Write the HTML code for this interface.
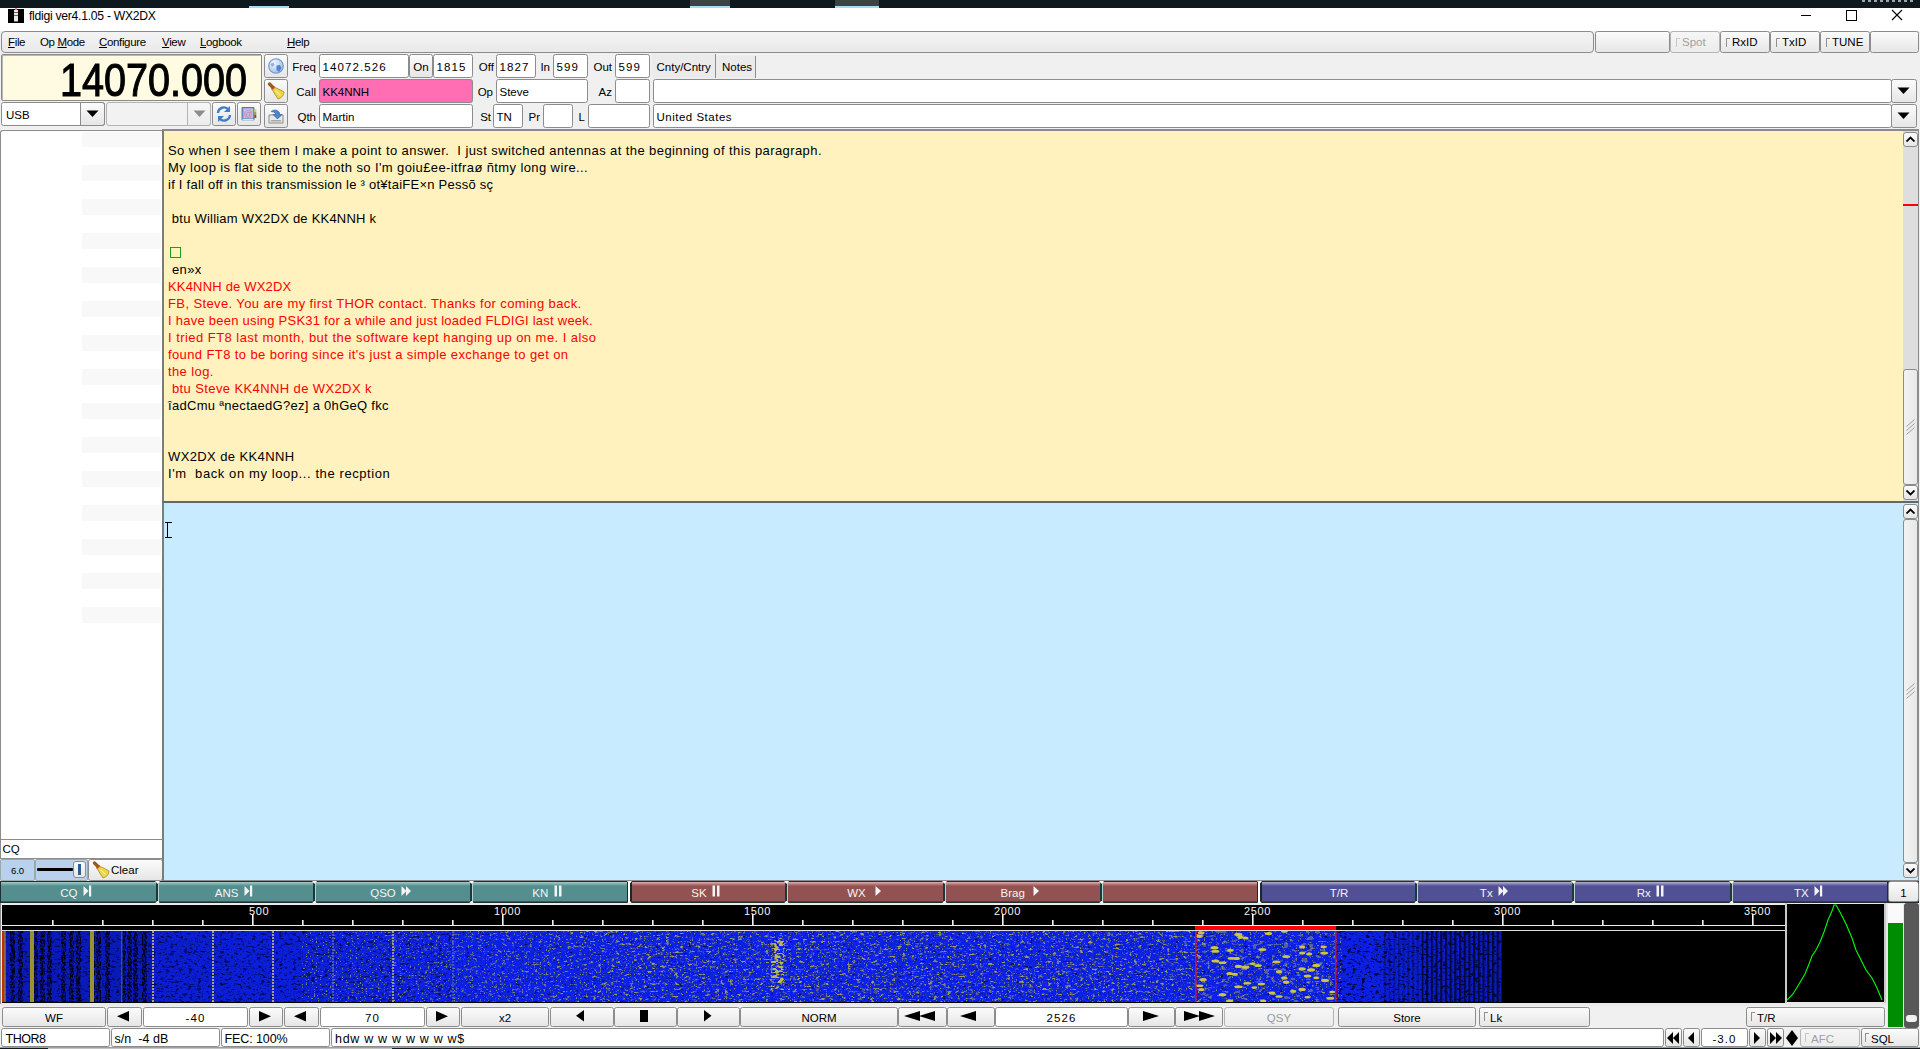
<!DOCTYPE html><html><head><meta charset="utf-8"><title>fldigi</title><style>
*{margin:0;padding:0;box-sizing:border-box}
html,body{width:1920px;height:1049px;overflow:hidden;background:#f0f0f0;font-family:"Liberation Sans",sans-serif;font-size:11.5px;color:#000}
div{position:absolute}
.t{white-space:pre;line-height:14px}
.fld{background:#fff;border:1px solid #8c8c8c;border-radius:2.5px}
.btn{background:linear-gradient(#fbfbfb,#e6e6e6);border:1px solid #8c8c8c;border-radius:2.5px}
.btnd{background:linear-gradient(#f6f6f6,#ececec);border:1px solid #b4b4b4;border-radius:3px}
.c{text-align:center}
</style></head><body><div class="" style="left:0px;top:0px;width:1920px;height:8px;background:#0d191e"></div><div class="" style="left:249px;top:6px;width:40px;height:2px;background:#a8dcf4"></div><div class="" style="left:690px;top:0px;width:40px;height:8px;background:#3a4446;border-bottom:2px solid #a8dcf4"></div><div class="" style="left:835px;top:0px;width:44px;height:8px;background:#3a4446;border-bottom:2px solid #a8dcf4"></div><div class="" style="left:1862px;top:0px;width:51px;height:2px;background:repeating-linear-gradient(90deg,#dde 0 3px,transparent 3px 6px);opacity:0.7"></div><div class="" style="left:0px;top:8px;width:1920px;height:23px;background:#fff"></div><div class="" style="left:8px;top:9px;width:16px;height:14px;background:#000"></div><div class="" style="left:14px;top:10px;width:4px;height:12px;background:repeating-linear-gradient(#e8e8e8 0 2.5px,#666 2.5px 3px)"></div><div class="" style="left:15px;top:8px;width:2px;height:2px;background:#ff8080"></div><div class="t" style="left:29px;top:5.77px;font-size:12.2px;line-height:20px;letter-spacing:-0.28px">fldigi ver4.1.05 - WX2DX</div><div class="" style="left:1801px;top:15px;width:10px;height:1px;background:#000"></div><div class="" style="left:1846px;top:10px;width:11px;height:11px;border:1px solid #000"></div><svg style="position:absolute;left:1891px;top:9px" width="12" height="12"><path d="M1 1L11 11M11 1L1 11" stroke="#000" stroke-width="1.1"/></svg><div class="btn" style="left:1px;top:31px;width:1593px;height:22px;background:linear-gradient(#f4f4f4,#e9e9e9);border-radius:4px"></div><div class="t" style="left:8px;top:32.02px;font-size:11.5px;line-height:20px;letter-spacing:-0.35px"><u>F</u>ile</div><div class="t" style="left:40px;top:32.02px;font-size:11.5px;line-height:20px;letter-spacing:-0.35px">Op <u>M</u>ode</div><div class="t" style="left:99px;top:32.02px;font-size:11.5px;line-height:20px;letter-spacing:-0.35px"><u>C</u>onfigure</div><div class="t" style="left:162px;top:32.02px;font-size:11.5px;line-height:20px;letter-spacing:-0.35px"><u>V</u>iew</div><div class="t" style="left:200px;top:32.02px;font-size:11.5px;line-height:20px;letter-spacing:-0.35px"><u>L</u>ogbook</div><div class="t" style="left:287px;top:32.02px;font-size:11.5px;line-height:20px;letter-spacing:-0.35px"><u>H</u>elp</div><div class="btn" style="left:1595px;top:31px;width:75px;height:22px;"></div><div class="btnd" style="left:1670px;top:31px;width:50px;height:22px;"></div><div class="" style="left:1676px;top:38px;width:4px;height:9px;border-left:1px solid #c8c8c8;border-top:1px solid #c8c8c8"></div><div class="t" style="left:1682px;top:32.02px;font-size:11.5px;line-height:20px;color:#a0a0a0">Spot</div><div class="btn" style="left:1720px;top:31px;width:50px;height:22px;"></div><div class="" style="left:1726px;top:38px;width:4px;height:9px;border-left:1px solid #909090;border-top:1px solid #909090"></div><div class="t" style="left:1732px;top:32.02px;font-size:11.5px;line-height:20px;color:#000">RxID</div><div class="btn" style="left:1770px;top:31px;width:50px;height:22px;"></div><div class="" style="left:1776px;top:38px;width:4px;height:9px;border-left:1px solid #909090;border-top:1px solid #909090"></div><div class="t" style="left:1782px;top:32.02px;font-size:11.5px;line-height:20px;color:#000">TxID</div><div class="btn" style="left:1820px;top:31px;width:50px;height:22px;"></div><div class="" style="left:1826px;top:38px;width:4px;height:9px;border-left:1px solid #909090;border-top:1px solid #909090"></div><div class="t" style="left:1832px;top:32.02px;font-size:11.5px;line-height:20px;color:#000">TUNE</div><div class="btn" style="left:1870px;top:31px;width:49px;height:22px;"></div><div class="" style="left:1px;top:54px;width:261px;height:47px;background:#fffbe2;border:1px solid #8a8a8a;border-radius:2px;box-shadow:inset 1px 1px 0 #b8b8b8"></div><div class="t" style="left:18px;width:229px;text-align:right;top:51.5px;font-size:47px;line-height:56px;transform:scaleX(0.842);transform-origin:100% 50%;-webkit-text-stroke:1.1px #000">14070.000</div><div class="fld" style="left:1px;top:102px;width:104px;height:24px;"></div><div class="t" style="left:6px;top:105.02px;font-size:11.5px;line-height:20px;">USB</div><div class="btn" style="left:80px;top:102px;width:25px;height:24px;border-radius:0 3px 3px 0"></div><svg style="position:absolute;left:86px;top:110px" width="13" height="8"><path d="M0.5 0.5H12.5L6.5 7z" fill="#000"/></svg><div class="btnd" style="left:106px;top:102px;width:105px;height:24px;background:#f2f2f2"></div><div class="btnd" style="left:187px;top:102px;width:24px;height:24px;border-radius:0 3px 3px 0"></div><svg style="position:absolute;left:193px;top:110px" width="13" height="8"><path d="M0.5 0.5H12.5L6.5 7z" fill="#8c8c8c"/></svg><div class="btn" style="left:212px;top:102px;width:24px;height:24px;"></div><div class="btn" style="left:237px;top:102px;width:24px;height:24px;"></div><div class="btn" style="left:264px;top:54px;width:24px;height:24px;"></div><div class="btn" style="left:264px;top:79px;width:24px;height:24px;"></div><div class="btn" style="left:264px;top:104px;width:24px;height:24px;"></div><svg style="position:absolute;left:215px;top:105px" width="18" height="18" viewBox="0 0 18 18"><path d="M3 8a6 6 0 0 1 10.5-3.5" fill="none" stroke="#3a7fd0" stroke-width="2.4"/><path d="M15 1v6h-6z" fill="#3a7fd0"/><path d="M15 10a6 6 0 0 1-10.5 3.5" fill="none" stroke="#3a7fd0" stroke-width="2.4"/><path d="M3 17v-6h6z" fill="#3a7fd0"/></svg><svg style="position:absolute;left:240px;top:105px" width="18" height="18" viewBox="0 0 18 18"><path d="M2 2.5H14V15H2z" fill="#7f9ccc" stroke="#4f6ea8" stroke-width="0.9"/><rect x="3.5" y="3.5" width="9.5" height="9.5" fill="#b4c6e6"/><rect x="2.5" y="14" width="11" height="1.5" fill="#dde4f0"/><text x="8.2" y="11.6" font-family="Liberation Sans" font-size="9" fill="#e070a8" text-anchor="middle">@</text><rect x="14.3" y="4" width="2" height="3" fill="#f0d020"/><rect x="14.3" y="7" width="2" height="3" fill="#80b030"/><rect x="14.3" y="10" width="2" height="3" fill="#e02020"/></svg><svg style="position:absolute;left:267px;top:57px" width="18" height="18" viewBox="0 0 18 18"><defs><radialGradient id="gl" cx="0.35" cy="0.3" r="0.8"><stop offset="0" stop-color="#f4f8ff"/><stop offset="1" stop-color="#98b8e0"/></radialGradient></defs><circle cx="9" cy="9" r="7.3" fill="url(#gl)" stroke="#6f98d0" stroke-width="1.1"/><path d="M9.5 8.5L13 8L14.5 11L12 15L9.5 13z" fill="#4f86d0"/><path d="M3.5 7L6.5 5.5L7.5 8L5 10z" fill="#8fb0e0"/></svg><svg style="position:absolute;left:267px;top:82px" width="18" height="18" viewBox="0 0 18 18"><path d="M2.5 2L6 5.5" stroke="#9a5a18" stroke-width="3.2" stroke-linecap="round"/><path d="M4.5 7.5L7.5 4.5" stroke="#d03a20" stroke-width="1.6"/><path d="M5.5 8L8 5.5Q11 6.5 17 10Q17 15 11 17Q7.5 12 5.5 8z" fill="#ecd448" stroke="#b09a20" stroke-width="0.9"/><path d="M8.5 8.5L13.5 13.5" stroke="#f8ec90" stroke-width="1.2"/></svg><svg style="position:absolute;left:267px;top:107px" width="18" height="18" viewBox="0 0 18 18"><path d="M2 8H16V16H2z" fill="#e8e8e8" stroke="#8a8a8a" stroke-width="1"/><rect x="4" y="13" width="10" height="1.5" fill="#a8a8a8"/><path d="M4 4.5Q9 1 12.5 5.5V7.5H15L10.5 12L6 7.5H8.5V6.5Q7 4.5 4 4.5z" fill="#4a86d0" stroke="#2a5aa0" stroke-width="0.6"/></svg><div class="t" style="left:256.00px;width:60px;text-align:right;top:57.02px;font-size:11.5px;line-height:20px;">Freq</div><div class="t" style="left:256.00px;width:60px;text-align:right;top:82.02px;font-size:11.5px;line-height:20px;">Call</div><div class="t" style="left:256.00px;width:60px;text-align:right;top:107.02px;font-size:11.5px;line-height:20px;">Qth</div><div class="t" style="left:434.00px;width:60px;text-align:right;top:57.02px;font-size:11.5px;line-height:20px;">Off</div><div class="t" style="left:490.00px;width:60px;text-align:right;top:57.02px;font-size:11.5px;line-height:20px;">In</div><div class="t" style="left:552.00px;width:60px;text-align:right;top:57.02px;font-size:11.5px;line-height:20px;">Out</div><div class="t" style="left:433.00px;width:60px;text-align:right;top:82.02px;font-size:11.5px;line-height:20px;">Op</div><div class="t" style="left:552.00px;width:60px;text-align:right;top:82.02px;font-size:11.5px;line-height:20px;">Az</div><div class="t" style="left:431.00px;width:60px;text-align:right;top:107.02px;font-size:11.5px;line-height:20px;">St</div><div class="t" style="left:480.00px;width:60px;text-align:right;top:107.02px;font-size:11.5px;line-height:20px;">Pr</div><div class="t" style="left:525.00px;width:60px;text-align:right;top:107.02px;font-size:11.5px;line-height:20px;">L</div><div class="fld" style="left:319px;top:54px;width:90px;height:24px;background:#fff"></div><div class="t" style="left:322.5px;top:57.02px;font-size:11.5px;line-height:20px;letter-spacing:1.1px">14072.526</div><div class="btn" style="left:409px;top:54px;width:24px;height:24px;"></div><div class="t" style="left:409.00px;width:24px;text-align:center;top:57.02px;font-size:11.5px;line-height:20px;">On</div><div class="fld" style="left:433px;top:54px;width:40px;height:24px;background:#fff"></div><div class="t" style="left:436.5px;top:57.02px;font-size:11.5px;line-height:20px;letter-spacing:1.1px">1815</div><div class="fld" style="left:319px;top:79px;width:154px;height:24px;background:#ff6db3"></div><div class="t" style="left:322.5px;top:82.02px;font-size:11.5px;line-height:20px;">KK4NNH</div><div class="fld" style="left:319px;top:104px;width:154px;height:24px;background:#fff"></div><div class="t" style="left:322.5px;top:107.02px;font-size:11.5px;line-height:20px;">Martin</div><div class="fld" style="left:496px;top:54px;width:40px;height:24px;background:#fff"></div><div class="t" style="left:499.5px;top:57.02px;font-size:11.5px;line-height:20px;letter-spacing:1.1px">1827</div><div class="fld" style="left:553px;top:54px;width:35px;height:24px;background:#fff"></div><div class="t" style="left:556.5px;top:57.02px;font-size:11.5px;line-height:20px;letter-spacing:1.1px">599</div><div class="fld" style="left:615px;top:54px;width:35px;height:24px;background:#fff"></div><div class="t" style="left:618.5px;top:57.02px;font-size:11.5px;line-height:20px;letter-spacing:1.1px">599</div><div class="fld" style="left:496px;top:79px;width:92px;height:24px;background:#fff"></div><div class="t" style="left:499.5px;top:82.02px;font-size:11.5px;line-height:20px;">Steve</div><div class="fld" style="left:615px;top:79px;width:35px;height:24px;background:#fff"></div><div class="fld" style="left:493px;top:104px;width:30px;height:24px;background:#fff"></div><div class="t" style="left:496.5px;top:107.02px;font-size:11.5px;line-height:20px;">TN</div><div class="fld" style="left:543px;top:104px;width:30px;height:24px;background:#fff"></div><div class="fld" style="left:588px;top:104px;width:62px;height:24px;background:#fff"></div><div class="" style="left:652px;top:54px;width:64px;height:24px;background:#ebebeb;border-right:1px solid #8c8c8c"></div><div class="t" style="left:656.5px;top:57.02px;font-size:11.5px;line-height:20px;">Cnty/Cntry</div><div class="" style="left:716px;top:56px;width:40px;height:22px;background:#ebebeb;border-right:1px solid #8c8c8c"></div><div class="t" style="left:722px;top:57.02px;font-size:11.5px;line-height:20px;">Notes</div><div class="fld" style="left:653px;top:79px;width:1239px;height:24px;background:#fff"></div><div class="btn" style="left:1891px;top:79px;width:26px;height:24px;"></div><svg style="position:absolute;left:1897px;top:87px" width="13" height="8"><path d="M0.5 0.5H12.5L6.5 7z" fill="#000"/></svg><div class="fld" style="left:653px;top:104px;width:1239px;height:24px;background:#fff"></div><div class="t" style="left:656.5px;top:107.02px;font-size:11.5px;line-height:20px;letter-spacing:0.5px">United States</div><div class="btn" style="left:1891px;top:104px;width:26px;height:24px;"></div><svg style="position:absolute;left:1897px;top:112px" width="13" height="8"><path d="M0.5 0.5H12.5L6.5 7z" fill="#000"/></svg><div class="" style="left:0px;top:130px;width:163px;height:710px;background:#fff;border:1px solid #8c8c8c;border-right:none;border-radius:3px 0 0 0"></div><div class="" style="left:82px;top:132px;width:79px;height:15px;background:#f8f8f8"></div><div class="" style="left:82px;top:165px;width:79px;height:16px;background:#f8f8f8"></div><div class="" style="left:82px;top:199px;width:79px;height:16px;background:#f8f8f8"></div><div class="" style="left:82px;top:233px;width:79px;height:16px;background:#f8f8f8"></div><div class="" style="left:82px;top:267px;width:79px;height:16px;background:#f8f8f8"></div><div class="" style="left:82px;top:301px;width:79px;height:16px;background:#f8f8f8"></div><div class="" style="left:82px;top:335px;width:79px;height:16px;background:#f8f8f8"></div><div class="" style="left:82px;top:369px;width:79px;height:16px;background:#f8f8f8"></div><div class="" style="left:82px;top:403px;width:79px;height:16px;background:#f8f8f8"></div><div class="" style="left:82px;top:437px;width:79px;height:16px;background:#f8f8f8"></div><div class="" style="left:82px;top:471px;width:79px;height:16px;background:#f8f8f8"></div><div class="" style="left:82px;top:505px;width:79px;height:16px;background:#f8f8f8"></div><div class="" style="left:82px;top:539px;width:79px;height:16px;background:#f8f8f8"></div><div class="" style="left:82px;top:573px;width:79px;height:16px;background:#f8f8f8"></div><div class="" style="left:82px;top:607px;width:79px;height:16px;background:#f8f8f8"></div><div class="fld" style="left:0px;top:839px;width:163px;height:20px;border-radius:0"></div><div class="t" style="left:2.5px;top:839.02px;font-size:11.5px;line-height:20px;">CQ</div><div class="" style="left:0px;top:859px;width:35px;height:22px;background:#b9d1ec;border:1px solid #9aa;border-radius:2px"></div><div class="t" style="left:0.50px;width:34px;text-align:center;top:860.71px;font-size:9.5px;line-height:20px;">6.0</div><div class="" style="left:35px;top:859px;width:53px;height:22px;background:#b9d1ec;border:1px solid #9aa;border-radius:2px"></div><div class="" style="left:37px;top:868px;width:36px;height:3px;background:#000;border-radius:1px"></div><div class="btn" style="left:73px;top:861px;width:13px;height:17px;border-radius:3px"></div><div class="" style="left:78px;top:864px;width:3px;height:11px;background:#2f5f8f"></div><div class="btn" style="left:88px;top:859px;width:75px;height:22px;"></div><svg style="position:absolute;left:92px;top:861px" width="18" height="18" viewBox="0 0 18 18"><path d="M2.5 2L6 5.5" stroke="#9a5a18" stroke-width="3.2" stroke-linecap="round"/><path d="M4.5 7.5L7.5 4.5" stroke="#d03a20" stroke-width="1.6"/><path d="M5.5 8L8 5.5Q11 6.5 17 10Q17 15 11 17Q7.5 12 5.5 8z" fill="#ecd448" stroke="#b09a20" stroke-width="0.9"/><path d="M8.5 8.5L13.5 13.5" stroke="#f8ec90" stroke-width="1.2"/></svg><div class="t" style="left:111px;top:860.02px;font-size:11.5px;line-height:20px;">Clear</div><div class="" style="left:162px;top:129px;width:1757px;height:373px;background:#fff2be;border:1px solid #606a6a;border-left:2px solid #7c7c7c;border-top:2px solid #8a8a8a;border-right-color:#8c8c8c"></div><div class="t" style="left:168px;top:141.00px;font-size:13px;line-height:20px;color:#000;letter-spacing:0.415px">So when I see them I make a point to answer.  I just switched antennas at the beginning of this paragraph.</div><div class="t" style="left:168px;top:158.00px;font-size:13px;line-height:20px;color:#000;letter-spacing:0.390px">My loop is flat side to the noth so I&#x27;m goiu£ee-itfraø ñtmy long wire...</div><div class="t" style="left:168px;top:175.00px;font-size:13px;line-height:20px;color:#000;letter-spacing:0.245px">if I fall off in this transmission le ³ ot¥taiFE×n Pessõ sç</div><div class="t" style="left:168px;top:209.00px;font-size:13px;line-height:20px;color:#000;letter-spacing:0.224px"> btu William WX2DX de KK4NNH k</div><div class="" style="left:170px;top:247px;width:11px;height:11px;border:1.5px solid #1aa01a"></div><div class="t" style="left:168px;top:260.00px;font-size:13px;line-height:20px;color:#000;letter-spacing:0.390px"> en»x</div><div class="t" style="left:168px;top:277.00px;font-size:13px;line-height:20px;color:#f00;letter-spacing:0.183px">KK4NNH de WX2DX</div><div class="t" style="left:168px;top:294.00px;font-size:13px;line-height:20px;color:#f00;letter-spacing:0.390px">FB, Steve. You are my first THOR contact. Thanks for coming back.</div><div class="t" style="left:168px;top:311.00px;font-size:13px;line-height:20px;color:#f00;letter-spacing:0.241px">I have been using PSK31 for a while and just loaded FLDIGI last week.</div><div class="t" style="left:168px;top:328.00px;font-size:13px;line-height:20px;color:#f00;letter-spacing:0.454px">I tried FT8 last month, but the software kept hanging up on me. I also</div><div class="t" style="left:168px;top:345.00px;font-size:13px;line-height:20px;color:#f00;letter-spacing:0.390px">found FT8 to be boring since it&#x27;s just a simple exchange to get on</div><div class="t" style="left:168px;top:362.00px;font-size:13px;line-height:20px;color:#f00;letter-spacing:0.390px">the log.</div><div class="t" style="left:168px;top:379.00px;font-size:13px;line-height:20px;color:#f00;letter-spacing:0.390px"> btu Steve KK4NNH de WX2DX k</div><div class="t" style="left:168px;top:396.00px;font-size:13px;line-height:20px;color:#000;letter-spacing:0.293px">îadCmu ªnectaedG?ez] a 0hGeQ fkc</div><div class="t" style="left:168px;top:447.00px;font-size:13px;line-height:20px;color:#000;letter-spacing:0.390px">WX2DX de KK4NNH</div><div class="t" style="left:168px;top:464.00px;font-size:13px;line-height:20px;color:#000;letter-spacing:0.590px">I&#x27;m  back on my loop... the recption</div><div class="" style="left:1903px;top:131px;width:15px;height:370px;background:#dedede"></div><div class="btn" style="left:1903px;top:132px;width:15px;height:15px;border-radius:3px"></div><svg style="position:absolute;left:1906px;top:136px" width="9" height="6"><path d="M0.5 5.5L4.5 1.5L8.5 5.5" fill="none" stroke="#000" stroke-width="1.8"/></svg><div class="" style="left:1903px;top:204px;width:15px;height:2px;background:#f00;height:1.5px"></div><div class="btn" style="left:1903px;top:369px;width:15px;height:116px;background:linear-gradient(90deg,#f2f2f2,#e8e8e8);border-radius:3px"></div><svg style="position:absolute;left:1906px;top:419px" width="10" height="16"><path d="M0.5 7.5L8.5 0.5M0.5 11.5L8.5 4.5M0.5 15.5L8.5 8.5" stroke="#8c8c8c" stroke-width="0.8"/></svg><div class="btn" style="left:1903px;top:485px;width:15px;height:15px;border-radius:3px"></div><svg style="position:absolute;left:1906px;top:490px" width="9" height="6"><path d="M0.5 0.5L4.5 4.5L8.5 0.5" fill="none" stroke="#000" stroke-width="1.8"/></svg><div class="" style="left:162px;top:502px;width:1757px;height:379px;background:#c8ebff;border:1px solid #8c8c8c;border-left:2px solid #7c7c7c;border-top:1px solid #606a6a"></div><div class="" style="left:167px;top:522px;width:2px;height:16px;background:#000;width:1px"></div><div class="" style="left:165px;top:522px;width:7px;height:1px;background:#000"></div><div class="" style="left:165px;top:537px;width:7px;height:1px;background:#000"></div><div class="btn" style="left:1903px;top:504px;width:15px;height:15px;border-radius:3px"></div><svg style="position:absolute;left:1906px;top:508px" width="9" height="6"><path d="M0.5 5.5L4.5 1.5L8.5 5.5" fill="none" stroke="#000" stroke-width="1.8"/></svg><div class="btn" style="left:1903px;top:519px;width:15px;height:344px;background:linear-gradient(90deg,#f2f2f2,#e8e8e8);border-radius:3px"></div><svg style="position:absolute;left:1906px;top:683px" width="10" height="16"><path d="M0.5 7.5L8.5 0.5M0.5 11.5L8.5 4.5M0.5 15.5L8.5 8.5" stroke="#8c8c8c" stroke-width="0.8"/></svg><div class="btn" style="left:1903px;top:863px;width:15px;height:15px;border-radius:3px"></div><svg style="position:absolute;left:1906px;top:868px" width="9" height="6"><path d="M0.5 0.5L4.5 4.5L8.5 0.5" fill="none" stroke="#000" stroke-width="1.8"/></svg><div class="" style="left:0px;top:881px;width:1919px;height:22px;background:#1e3030"></div><div class="" style="left:0px;top:903px;width:1919px;height:2px;background:#dcdcdc"></div><div style="left:1.00px;top:882px;width:156.03px;height:20px;background:linear-gradient(#a4cccc 0px,#548e8e 4px,#548e8e 19px,rgba(0,0,0,0.3) 20px)"></div><div class="t" style="left:38.95px;width:60px;text-align:center;top:883.02px;font-size:11.5px;line-height:20px;color:#f4f4f4">CQ</div><svg style="position:absolute;left:83px;top:885px" width="9" height="12"><path d="M0.5 1L5.5 6L0.5 11z" fill="#f4f4f4"/><rect x="6" y="0.5" width="2.2" height="11" fill="#f4f4f4"/></svg><div style="left:157.03px;top:882px;width:157.43px;height:20px;background:linear-gradient(#a4cccc 0px,#548e8e 4px,#548e8e 19px,rgba(0,0,0,0.3) 20px)"></div><div class="t" style="left:196.65px;width:60px;text-align:center;top:883.02px;font-size:11.5px;line-height:20px;color:#f4f4f4">ANS</div><svg style="position:absolute;left:244px;top:885px" width="9" height="12"><path d="M0.5 1L5.5 6L0.5 11z" fill="#f4f4f4"/><rect x="6" y="0.5" width="2.2" height="11" fill="#f4f4f4"/></svg><div style="left:314.46px;top:882px;width:157.43px;height:20px;background:linear-gradient(#a4cccc 0px,#548e8e 4px,#548e8e 19px,rgba(0,0,0,0.3) 20px)"></div><div class="t" style="left:353.00px;width:60px;text-align:center;top:883.02px;font-size:11.5px;line-height:20px;color:#f4f4f4">QSO</div><svg style="position:absolute;left:401px;top:885px" width="11" height="12"><path d="M0.5 1L5.5 6L0.5 11zM5 1L10 6L5 11z" fill="#f4f4f4"/></svg><div style="left:471.89px;top:882px;width:157.43px;height:20px;background:linear-gradient(#a4cccc 0px,#548e8e 4px,#548e8e 19px,rgba(0,0,0,0.3) 20px)"></div><div class="t" style="left:510.25px;width:60px;text-align:center;top:883.02px;font-size:11.5px;line-height:20px;color:#f4f4f4">KN</div><svg style="position:absolute;left:554px;top:885px" width="9" height="12"><rect x="0.5" y="0.5" width="2.5" height="11" fill="#f4f4f4"/><rect x="5" y="0.5" width="2.5" height="11" fill="#f4f4f4"/></svg><div style="left:629.32px;top:882px;width:157.43px;height:20px;background:linear-gradient(#dcb0b0 0px,#935252 4px,#935252 19px,rgba(0,0,0,0.3) 20px)"></div><div class="t" style="left:669.00px;width:60px;text-align:center;top:883.02px;font-size:11.5px;line-height:20px;color:#f4f4f4">SK</div><svg style="position:absolute;left:712px;top:885px" width="9" height="12"><rect x="0.5" y="0.5" width="2.5" height="11" fill="#f4f4f4"/><rect x="5" y="0.5" width="2.5" height="11" fill="#f4f4f4"/></svg><div style="left:786.75px;top:882px;width:157.43px;height:20px;background:linear-gradient(#dcb0b0 0px,#935252 4px,#935252 19px,rgba(0,0,0,0.3) 20px)"></div><div class="t" style="left:826.50px;width:60px;text-align:center;top:883.02px;font-size:11.5px;line-height:20px;color:#f4f4f4">WX</div><svg style="position:absolute;left:874.5px;top:885px" width="8" height="12"><path d="M0.5 1L6 6L0.5 11z" fill="#f4f4f4"/></svg><div style="left:944.18px;top:882px;width:157.43px;height:20px;background:linear-gradient(#dcb0b0 0px,#935252 4px,#935252 19px,rgba(0,0,0,0.3) 20px)"></div><div class="t" style="left:982.75px;width:60px;text-align:center;top:883.02px;font-size:11.5px;line-height:20px;color:#f4f4f4">Brag</div><svg style="position:absolute;left:1033px;top:885px" width="8" height="12"><path d="M0.5 1L6 6L0.5 11z" fill="#f4f4f4"/></svg><div style="left:1101.61px;top:882px;width:157.43px;height:20px;background:linear-gradient(#dcb0b0 0px,#935252 4px,#935252 19px,rgba(0,0,0,0.3) 20px)"></div><div style="left:1259.04px;top:882px;width:157.43px;height:20px;background:linear-gradient(#b4b2dc 0px,#525094 4px,#525094 19px,rgba(0,0,0,0.3) 20px)"></div><div class="t" style="left:1309.00px;width:60px;text-align:center;top:883.02px;font-size:11.5px;line-height:20px;color:#f4f4f4">T/R</div><div style="left:1416.47px;top:882px;width:157.43px;height:20px;background:linear-gradient(#b4b2dc 0px,#525094 4px,#525094 19px,rgba(0,0,0,0.3) 20px)"></div><div class="t" style="left:1456.25px;width:60px;text-align:center;top:883.02px;font-size:11.5px;line-height:20px;color:#f4f4f4">Tx</div><svg style="position:absolute;left:1498px;top:885px" width="11" height="12"><path d="M0.5 1L5.5 6L0.5 11zM5 1L10 6L5 11z" fill="#f4f4f4"/></svg><div style="left:1573.90px;top:882px;width:157.43px;height:20px;background:linear-gradient(#b4b2dc 0px,#525094 4px,#525094 19px,rgba(0,0,0,0.3) 20px)"></div><div class="t" style="left:1613.75px;width:60px;text-align:center;top:883.02px;font-size:11.5px;line-height:20px;color:#f4f4f4">Rx</div><svg style="position:absolute;left:1656px;top:885px" width="9" height="12"><rect x="0.5" y="0.5" width="2.5" height="11" fill="#f4f4f4"/><rect x="5" y="0.5" width="2.5" height="11" fill="#f4f4f4"/></svg><div style="left:1731.33px;top:882px;width:156.17px;height:20px;background:linear-gradient(#b4b2dc 0px,#525094 4px,#525094 19px,rgba(0,0,0,0.3) 20px)"></div><div class="t" style="left:1771.25px;width:60px;text-align:center;top:883.02px;font-size:11.5px;line-height:20px;color:#f4f4f4">TX</div><svg style="position:absolute;left:1814px;top:885px" width="9" height="12"><path d="M0.5 1L5.5 6L0.5 11z" fill="#f4f4f4"/><rect x="6" y="0.5" width="2.2" height="11" fill="#f4f4f4"/></svg><div style="left:155.53px;top:881px;width:3px;height:21px;background:linear-gradient(90deg,#1a3a3a 0 2px,#b8d0d0 2px)"></div><svg style="position:absolute;left:154.53px;top:881px" width="5" height="3"><path d="M0 0H5L3 2.5H2z" fill="#fff"/></svg><svg style="position:absolute;left:154.53px;top:900.5px" width="5" height="3"><path d="M2 0H3L5 2.5H0z" fill="#fff"/></svg><div style="left:312.96px;top:881px;width:3px;height:21px;background:linear-gradient(90deg,#1a3a3a 0 2px,#b8d0d0 2px)"></div><svg style="position:absolute;left:311.96px;top:881px" width="5" height="3"><path d="M0 0H5L3 2.5H2z" fill="#fff"/></svg><svg style="position:absolute;left:311.96px;top:900.5px" width="5" height="3"><path d="M2 0H3L5 2.5H0z" fill="#fff"/></svg><div style="left:470.39px;top:881px;width:3px;height:21px;background:linear-gradient(90deg,#1a3a3a 0 2px,#b8d0d0 2px)"></div><svg style="position:absolute;left:469.39px;top:881px" width="5" height="3"><path d="M0 0H5L3 2.5H2z" fill="#fff"/></svg><svg style="position:absolute;left:469.39px;top:900.5px" width="5" height="3"><path d="M2 0H3L5 2.5H0z" fill="#fff"/></svg><div style="left:626.82px;top:881px;width:5px;height:21px;background:linear-gradient(90deg,#1e2828 0 1px,#fff 1px 3px,#1e2828 3px)"></div><svg style="position:absolute;left:626.82px;top:881px" width="5" height="3"><path d="M0 0H5L3 2.5H2z" fill="#fff"/></svg><svg style="position:absolute;left:626.82px;top:900.5px" width="5" height="3"><path d="M2 0H3L5 2.5H0z" fill="#fff"/></svg><div style="left:785.25px;top:881px;width:3px;height:21px;background:linear-gradient(90deg,#1a3a3a 0 2px,#b8d0d0 2px)"></div><svg style="position:absolute;left:784.25px;top:881px" width="5" height="3"><path d="M0 0H5L3 2.5H2z" fill="#fff"/></svg><svg style="position:absolute;left:784.25px;top:900.5px" width="5" height="3"><path d="M2 0H3L5 2.5H0z" fill="#fff"/></svg><div style="left:942.68px;top:881px;width:3px;height:21px;background:linear-gradient(90deg,#1a3a3a 0 2px,#b8d0d0 2px)"></div><svg style="position:absolute;left:941.68px;top:881px" width="5" height="3"><path d="M0 0H5L3 2.5H2z" fill="#fff"/></svg><svg style="position:absolute;left:941.68px;top:900.5px" width="5" height="3"><path d="M2 0H3L5 2.5H0z" fill="#fff"/></svg><div style="left:1100.11px;top:881px;width:3px;height:21px;background:linear-gradient(90deg,#1a3a3a 0 2px,#b8d0d0 2px)"></div><svg style="position:absolute;left:1099.11px;top:881px" width="5" height="3"><path d="M0 0H5L3 2.5H2z" fill="#fff"/></svg><svg style="position:absolute;left:1099.11px;top:900.5px" width="5" height="3"><path d="M2 0H3L5 2.5H0z" fill="#fff"/></svg><div style="left:1256.54px;top:881px;width:5px;height:21px;background:linear-gradient(90deg,#1e2828 0 1px,#fff 1px 3px,#1e2828 3px)"></div><svg style="position:absolute;left:1256.54px;top:881px" width="5" height="3"><path d="M0 0H5L3 2.5H2z" fill="#fff"/></svg><svg style="position:absolute;left:1256.54px;top:900.5px" width="5" height="3"><path d="M2 0H3L5 2.5H0z" fill="#fff"/></svg><div style="left:1414.97px;top:881px;width:3px;height:21px;background:linear-gradient(90deg,#1a3a3a 0 2px,#b8d0d0 2px)"></div><svg style="position:absolute;left:1413.97px;top:881px" width="5" height="3"><path d="M0 0H5L3 2.5H2z" fill="#fff"/></svg><svg style="position:absolute;left:1413.97px;top:900.5px" width="5" height="3"><path d="M2 0H3L5 2.5H0z" fill="#fff"/></svg><div style="left:1572.40px;top:881px;width:3px;height:21px;background:linear-gradient(90deg,#1a3a3a 0 2px,#b8d0d0 2px)"></div><svg style="position:absolute;left:1571.40px;top:881px" width="5" height="3"><path d="M0 0H5L3 2.5H2z" fill="#fff"/></svg><svg style="position:absolute;left:1571.40px;top:900.5px" width="5" height="3"><path d="M2 0H3L5 2.5H0z" fill="#fff"/></svg><div style="left:1729.83px;top:881px;width:3px;height:21px;background:linear-gradient(90deg,#1a3a3a 0 2px,#b8d0d0 2px)"></div><svg style="position:absolute;left:1728.83px;top:881px" width="5" height="3"><path d="M0 0H5L3 2.5H2z" fill="#fff"/></svg><svg style="position:absolute;left:1728.83px;top:900.5px" width="5" height="3"><path d="M2 0H3L5 2.5H0z" fill="#fff"/></svg><div class="btn" style="left:1888px;top:881px;width:31px;height:21px;"></div><div class="t" style="left:1893.50px;width:20px;text-align:center;top:883.02px;font-size:11.5px;line-height:20px;">1</div><div class="" style="left:0px;top:903px;width:1919px;height:103px;background:#eaeaea"></div><div class="" style="left:0px;top:903px;width:1px;height:101px;background:#8c8c8c"></div><div class="" style="left:2px;top:905px;width:1783px;height:26px;background:#000"></div><div class="" style="left:2px;top:925px;width:1783px;height:1px;background:#f0f0f0"></div><div class="" style="left:2px;top:930px;width:1783px;height:1px;background:#dcdcdc"></div><svg style="position:absolute;left:0;top:0" width="1800" height="930"><rect x="52" y="920" width="1.6" height="5" fill="#f4f4f4"/><rect x="102" y="920" width="1.6" height="5" fill="#f4f4f4"/><rect x="152" y="920" width="1.6" height="5" fill="#f4f4f4"/><rect x="202" y="920" width="1.6" height="5" fill="#f4f4f4"/><rect x="252" y="914" width="1.6" height="11" fill="#f4f4f4"/><rect x="302" y="920" width="1.6" height="5" fill="#f4f4f4"/><rect x="352" y="920" width="1.6" height="5" fill="#f4f4f4"/><rect x="402" y="920" width="1.6" height="5" fill="#f4f4f4"/><rect x="452" y="920" width="1.6" height="5" fill="#f4f4f4"/><rect x="502" y="914" width="1.6" height="11" fill="#f4f4f4"/><rect x="552" y="920" width="1.6" height="5" fill="#f4f4f4"/><rect x="602" y="920" width="1.6" height="5" fill="#f4f4f4"/><rect x="652" y="920" width="1.6" height="5" fill="#f4f4f4"/><rect x="702" y="920" width="1.6" height="5" fill="#f4f4f4"/><rect x="752" y="914" width="1.6" height="11" fill="#f4f4f4"/><rect x="802" y="920" width="1.6" height="5" fill="#f4f4f4"/><rect x="852" y="920" width="1.6" height="5" fill="#f4f4f4"/><rect x="902" y="920" width="1.6" height="5" fill="#f4f4f4"/><rect x="952" y="920" width="1.6" height="5" fill="#f4f4f4"/><rect x="1002" y="914" width="1.6" height="11" fill="#f4f4f4"/><rect x="1052" y="920" width="1.6" height="5" fill="#f4f4f4"/><rect x="1102" y="920" width="1.6" height="5" fill="#f4f4f4"/><rect x="1152" y="920" width="1.6" height="5" fill="#f4f4f4"/><rect x="1202" y="920" width="1.6" height="5" fill="#f4f4f4"/><rect x="1252" y="914" width="1.6" height="11" fill="#f4f4f4"/><rect x="1302" y="920" width="1.6" height="5" fill="#f4f4f4"/><rect x="1352" y="920" width="1.6" height="5" fill="#f4f4f4"/><rect x="1402" y="920" width="1.6" height="5" fill="#f4f4f4"/><rect x="1452" y="920" width="1.6" height="5" fill="#f4f4f4"/><rect x="1502" y="914" width="1.6" height="11" fill="#f4f4f4"/><rect x="1552" y="920" width="1.6" height="5" fill="#f4f4f4"/><rect x="1602" y="920" width="1.6" height="5" fill="#f4f4f4"/><rect x="1652" y="920" width="1.6" height="5" fill="#f4f4f4"/><rect x="1702" y="920" width="1.6" height="5" fill="#f4f4f4"/><rect x="1752" y="914" width="1.6" height="11" fill="#f4f4f4"/></svg><div class="t" style="left:249px;top:901.19px;font-size:11px;line-height:20px;color:#f4f4f4;letter-spacing:0.6px">500</div><div class="t" style="left:494px;top:901.19px;font-size:11px;line-height:20px;color:#f4f4f4;letter-spacing:0.6px">1000</div><div class="t" style="left:744px;top:901.19px;font-size:11px;line-height:20px;color:#f4f4f4;letter-spacing:0.6px">1500</div><div class="t" style="left:994px;top:901.19px;font-size:11px;line-height:20px;color:#f4f4f4;letter-spacing:0.6px">2000</div><div class="t" style="left:1244px;top:901.19px;font-size:11px;line-height:20px;color:#f4f4f4;letter-spacing:0.6px">2500</div><div class="t" style="left:1494px;top:901.19px;font-size:11px;line-height:20px;color:#f4f4f4;letter-spacing:0.6px">3000</div><div class="t" style="left:1744px;top:901.19px;font-size:11px;line-height:20px;color:#f4f4f4;letter-spacing:0.6px">3500</div><div class="" style="left:2px;top:931px;width:1783px;height:72px;background:#000"></div><svg style="position:absolute;left:2px;top:931px" width="1783" height="71" viewBox="0 0 1783 71">
<defs>
<filter id="nb" x="0" y="0" width="100%" height="100%" color-interpolation-filters="sRGB"><feTurbulence type="fractalNoise" baseFrequency="0.22 0.4" numOctaves="2" seed="11" result="n"/>
<feColorMatrix in="n" type="matrix" values="0 0 0 0 0  0 0 0 0 0.02  0 0 0 0 0.35  -8 0 0 0 2.6"/></filter>
<filter id="nbd" x="0" y="0" width="100%" height="100%" color-interpolation-filters="sRGB"><feTurbulence type="fractalNoise" baseFrequency="0.22 0.4" numOctaves="2" seed="12" result="n"/>
<feColorMatrix in="n" type="matrix" values="0 0 0 0 0  0 0 0 0 0.0  0 0 0 0 0.15  -8 0 0 0 3.3"/></filter>
<filter id="ny" x="0" y="0" width="100%" height="100%" color-interpolation-filters="sRGB"><feTurbulence type="fractalNoise" baseFrequency="0.22 0.4" numOctaves="2" seed="5" result="n"/>
<feColorMatrix in="n" type="matrix" values="0 0 0 0 0.62  0 0 0 0 0.62  0 0 0 0 0.35  8 0 0 0 -5.0"/></filter>
<filter id="nyw" x="0" y="0" width="100%" height="100%" color-interpolation-filters="sRGB"><feTurbulence type="fractalNoise" baseFrequency="0.22 0.4" numOctaves="2" seed="6" result="n"/>
<feColorMatrix in="n" type="matrix" values="0 0 0 0 0.62  0 0 0 0 0.62  0 0 0 0 0.35  8 0 0 0 -5.1"/></filter>
<filter id="nyb" x="0" y="0" width="100%" height="100%" color-interpolation-filters="sRGB"><feTurbulence type="fractalNoise" baseFrequency="0.16 0.32" numOctaves="1" seed="21" result="n"/>
<feColorMatrix in="n" type="matrix" values="0 0 0 0 0.86  0 0 0 0 0.82  0 0 0 0 0.28  22 0 0 0 -13.6"/></filter>
<filter id="nyc" x="0" y="0" width="100%" height="100%" color-interpolation-filters="sRGB"><feTurbulence type="fractalNoise" baseFrequency="0.22 0.4" numOctaves="2" seed="31" result="n"/>
<feColorMatrix in="n" type="matrix" values="0 0 0 0 0.75  0 0 0 0 0.72  0 0 0 0 0.3  9 0 0 0 -4.3"/></filter>
<filter id="ncol" x="0" y="0" width="100%" height="100%" color-interpolation-filters="sRGB"><feTurbulence type="fractalNoise" baseFrequency="0.6 0.45" numOctaves="1" seed="3" result="n"/>
<feColorMatrix in="n" type="matrix" values="0 0 0 0 0  0 0 0 0 0  0 0 0 0 0.12  -7 0 0 0 3.9"/></filter>
<pattern id="dot" width="2" height="3" patternUnits="userSpaceOnUse"><rect x="0" y="0" width="2" height="2" fill="#b4b080"/></pattern>
<filter id="nf" x="0" y="0" width="100%" height="100%" color-interpolation-filters="sRGB"><feTurbulence type="fractalNoise" baseFrequency="0.65 0.85" numOctaves="1" seed="41" result="n"/>
<feColorMatrix in="n" type="matrix" values="0 0 0 0 0.02  0 0 0 0 0.04  0 0 0 0 0.45  -6 0 0 0 2.55"/></filter>
<filter id="nyf" x="0" y="0" width="100%" height="100%" color-interpolation-filters="sRGB"><feTurbulence type="fractalNoise" baseFrequency="0.5 0.7" numOctaves="1" seed="43" result="n"/>
<feColorMatrix in="n" type="matrix" values="0 0 0 0 0.62  0 0 0 0 0.62  0 0 0 0 0.42  9 0 0 0 -5.7"/></filter>
<linearGradient id="fadein" x1="0" x2="1"><stop offset="0" stop-color="#fff" stop-opacity="0"/><stop offset="1" stop-color="#fff" stop-opacity="1"/></linearGradient>
<mask id="mfade" maskUnits="userSpaceOnUse" x="300" y="0" width="300" height="71"><rect x="300" y="0" width="300" height="71" fill="url(#fadein)"/></mask>
<linearGradient id="vs" x1="0" x2="1"><stop offset="0" stop-color="#000" stop-opacity="0.2"/><stop offset="1" stop-color="#000" stop-opacity="0"/></linearGradient>
<linearGradient id="vs2" x1="0" x2="1"><stop offset="0" stop-color="#000" stop-opacity="0"/><stop offset="1" stop-color="#000" stop-opacity="0.3"/></linearGradient>
<pattern id="str" width="7.3" height="71" patternUnits="userSpaceOnUse"><rect x="0" y="0" width="3" height="71" fill="#000" fill-opacity="0.45"/></pattern>
<pattern id="str2" width="4.7" height="71" patternUnits="userSpaceOnUse"><rect x="0" y="0" width="2.2" height="71" fill="#000" fill-opacity="0.65"/></pattern>
</defs>
<rect x="0" y="0" width="1500" height="71" fill="#0c22ec"/>
<rect x="0" y="0" width="1500" height="71" filter="url(#nb)"/>
<rect x="9" y="0" width="3" height="71" fill="#000" fill-opacity="0.25"/><rect x="8.5" y="0" width="4.5" height="71" filter="url(#ncol)"/><rect x="17" y="0" width="3" height="71" fill="#000" fill-opacity="0.25"/><rect x="16.5" y="0" width="4.5" height="71" filter="url(#ncol)"/><rect x="32" y="0" width="3" height="71" fill="#000" fill-opacity="0.25"/><rect x="31.5" y="0" width="4.5" height="71" filter="url(#ncol)"/><rect x="39" y="0" width="3" height="71" fill="#000" fill-opacity="0.25"/><rect x="38.5" y="0" width="4.5" height="71" filter="url(#ncol)"/><rect x="46" y="0" width="3" height="71" fill="#000" fill-opacity="0.25"/><rect x="45.5" y="0" width="4.5" height="71" filter="url(#ncol)"/><rect x="60" y="0" width="3" height="71" fill="#000" fill-opacity="0.25"/><rect x="59.5" y="0" width="4.5" height="71" filter="url(#ncol)"/><rect x="68" y="0" width="3" height="71" fill="#000" fill-opacity="0.25"/><rect x="67.5" y="0" width="4.5" height="71" filter="url(#ncol)"/><rect x="75" y="0" width="3" height="71" fill="#000" fill-opacity="0.25"/><rect x="74.5" y="0" width="4.5" height="71" filter="url(#ncol)"/><rect x="89" y="0" width="3" height="71" fill="#000" fill-opacity="0.25"/><rect x="88.5" y="0" width="4.5" height="71" filter="url(#ncol)"/><rect x="95" y="0" width="3" height="71" fill="#000" fill-opacity="0.25"/><rect x="94.5" y="0" width="4.5" height="71" filter="url(#ncol)"/><rect x="104" y="0" width="3" height="71" fill="#000" fill-opacity="0.25"/><rect x="103.5" y="0" width="4.5" height="71" filter="url(#ncol)"/><rect x="120" y="0" width="3" height="71" fill="#000" fill-opacity="0.25"/><rect x="119.5" y="0" width="4.5" height="71" filter="url(#ncol)"/><rect x="126" y="0" width="3" height="71" fill="#000" fill-opacity="0.25"/><rect x="125.5" y="0" width="4.5" height="71" filter="url(#ncol)"/><rect x="132" y="0" width="3" height="71" fill="#000" fill-opacity="0.25"/><rect x="131.5" y="0" width="4.5" height="71" filter="url(#ncol)"/><rect x="141" y="0" width="3" height="71" fill="#000" fill-opacity="0.25"/><rect x="140.5" y="0" width="4.5" height="71" filter="url(#ncol)"/><rect x="0" y="0" width="150" height="71" filter="url(#nbd)" opacity="0.5"/>
<rect x="150" y="0" width="300" height="71" fill="url(#vs)" opacity="0.6"/>
<rect x="150" y="0" width="300" height="71" filter="url(#nbd)" opacity="0.6"/>

<rect x="300" y="0" width="300" height="71" filter="url(#ny)" mask="url(#mfade)"/><rect x="600" y="0" width="600" height="71" filter="url(#ny)"/><rect x="150" y="0" width="1350" height="71" filter="url(#nf)" opacity="0.6"/><rect x="300" y="0" width="1040" height="71" filter="url(#nyf)" opacity="0.8"/>
<rect x="600" y="0" width="600" height="71" filter="url(#nyw)" opacity="0.5"/>
<rect x="769" y="9" width="13" height="50" filter="url(#nyc)"/>
<rect x="1193" y="0" width="141" height="71" filter="url(#nyw)" opacity="0.6"/>
<rect x="1193" y="0" width="141" height="71" filter="url(#nyb)" opacity="0.35"/><ellipse cx="1197.5" cy="5.3" rx="3.3" ry="1.7" fill="#cec444"/><ellipse cx="1199.2" cy="1.7" rx="3.3" ry="1.5" fill="#cec444"/><ellipse cx="1236.4" cy="3.5" rx="4" ry="1.7" fill="#cec444"/><ellipse cx="1238.2" cy="6.2" rx="3" ry="1.7" fill="#cec444"/><ellipse cx="1243.5" cy="7.1" rx="3" ry="1.5" fill="#cec444"/><ellipse cx="1266.5" cy="2.6" rx="3.7" ry="1.7" fill="#cec444"/><ellipse cx="1282.4" cy="0.5" rx="3.3" ry="1.3" fill="#cec444"/><ellipse cx="1212.5" cy="16.8" rx="4" ry="1.7" fill="#cec444"/><ellipse cx="1213.4" cy="20.3" rx="4" ry="1.5" fill="#cec444"/><ellipse cx="1228.4" cy="19.4" rx="3.3" ry="1.3" fill="#cec444"/><ellipse cx="1234.6" cy="27.4" rx="3.3" ry="1.7" fill="#cec444"/><ellipse cx="1260.3" cy="18.6" rx="4" ry="1.7" fill="#cec444"/><ellipse cx="1300.1" cy="15.9" rx="3" ry="1.7" fill="#cec444"/><ellipse cx="1321.4" cy="15.9" rx="3" ry="1.3" fill="#cec444"/><ellipse cx="1300.1" cy="22.1" rx="3" ry="1.5" fill="#cec444"/><ellipse cx="1307.2" cy="23.0" rx="3" ry="1.5" fill="#cec444"/><ellipse cx="1322.2" cy="22.1" rx="4" ry="1.7" fill="#cec444"/><ellipse cx="1284.2" cy="25.6" rx="4" ry="1.7" fill="#cec444"/><ellipse cx="1213.4" cy="30.1" rx="4" ry="1.5" fill="#cec444"/><ellipse cx="1220.5" cy="31.8" rx="4" ry="1.3" fill="#cec444"/><ellipse cx="1229.3" cy="27.4" rx="3.7" ry="1.3" fill="#cec444"/><ellipse cx="1250.6" cy="32.7" rx="3" ry="1.3" fill="#cec444"/><ellipse cx="1274.5" cy="30.9" rx="4" ry="1.3" fill="#cec444"/><ellipse cx="1236.4" cy="35.4" rx="3.7" ry="1.7" fill="#cec444"/><ellipse cx="1243.5" cy="36.3" rx="4" ry="1.7" fill="#cec444"/><ellipse cx="1255.9" cy="34.5" rx="3.7" ry="1.5" fill="#cec444"/><ellipse cx="1314.3" cy="34.5" rx="4" ry="1.7" fill="#cec444"/><ellipse cx="1300.1" cy="38.0" rx="3.7" ry="1.7" fill="#cec444"/><ellipse cx="1309.0" cy="38.9" rx="4" ry="1.7" fill="#cec444"/><ellipse cx="1227.6" cy="42.5" rx="3.3" ry="1.5" fill="#cec444"/><ellipse cx="1232.9" cy="43.3" rx="3" ry="1.5" fill="#cec444"/><ellipse cx="1277.1" cy="40.7" rx="3.3" ry="1.7" fill="#cec444"/><ellipse cx="1201.0" cy="48.6" rx="3.7" ry="1.7" fill="#cec444"/><ellipse cx="1282.4" cy="46.9" rx="3" ry="1.7" fill="#cec444"/><ellipse cx="1284.2" cy="51.3" rx="3.3" ry="1.7" fill="#cec444"/><ellipse cx="1305.4" cy="45.1" rx="3.7" ry="1.5" fill="#cec444"/><ellipse cx="1314.3" cy="46.9" rx="3" ry="1.3" fill="#cec444"/><ellipse cx="1323.1" cy="49.5" rx="4" ry="1.7" fill="#cec444"/><ellipse cx="1245.3" cy="52.2" rx="4" ry="1.3" fill="#cec444"/><ellipse cx="1259.4" cy="53.1" rx="3.7" ry="1.3" fill="#cec444"/><ellipse cx="1197.5" cy="54.8" rx="4" ry="1.3" fill="#cec444"/><ellipse cx="1199.2" cy="58.4" rx="3" ry="1.5" fill="#cec444"/><ellipse cx="1236.4" cy="55.7" rx="4" ry="1.5" fill="#cec444"/><ellipse cx="1252.3" cy="56.6" rx="3" ry="1.3" fill="#cec444"/><ellipse cx="1291.3" cy="60.2" rx="3" ry="1.5" fill="#cec444"/><ellipse cx="1300.1" cy="58.4" rx="3.7" ry="1.7" fill="#cec444"/><ellipse cx="1220.5" cy="63.7" rx="3.7" ry="1.7" fill="#cec444"/><ellipse cx="1270.0" cy="61.9" rx="3.3" ry="1.3" fill="#cec444"/><ellipse cx="1277.1" cy="65.5" rx="3.7" ry="1.3" fill="#cec444"/><ellipse cx="1305.4" cy="66.3" rx="3" ry="1.3" fill="#cec444"/><ellipse cx="1330.2" cy="61.0" rx="3" ry="1.3" fill="#cec444"/><ellipse cx="1328.4" cy="67.2" rx="4" ry="1.5" fill="#cec444"/><ellipse cx="1227.6" cy="69.9" rx="3.7" ry="1.3" fill="#cec444"/><ellipse cx="1261.2" cy="69.9" rx="3" ry="1.5" fill="#cec444"/>
<rect x="1334" y="0" width="166" height="71" fill="url(#vs2)" opacity="0.6"/>
<rect x="1380" y="0" width="40" height="71" fill="url(#str2)" opacity="0.4"/><rect x="1420" y="0" width="80" height="71" fill="url(#str2)" opacity="1"/>
<rect x="1334" y="0" width="166" height="71" filter="url(#nbd)" opacity="0.8"/>
<rect x="0" y="0" width="2.5" height="71" fill="#ff3a00"/>
<rect x="2.5" y="0" width="1" height="71" fill="#f0d040"/>
<rect x="28" y="0" width="4" height="71" fill="#c4bc44"/>
<rect x="88" y="0" width="4" height="71" fill="#c4bc44"/>
<rect x="0" y="0" width="150" height="71" fill="#000" opacity="0.22"/>
<rect x="119" y="0" width="1.5" height="71" fill="#3a6ad8" opacity="0.7"/>
<rect x="150" y="0" width="2" height="71" fill="url(#dot)" opacity="0.9"/>
<rect x="210" y="0" width="2" height="71" fill="url(#dot)" opacity="0.9"/>
<rect x="270" y="0" width="2" height="71" fill="url(#dot)" opacity="0.9"/>
<rect x="330" y="0" width="2" height="71" fill="url(#dot)" opacity="0.4"/>
<rect x="390" y="0" width="2" height="71" fill="url(#dot)" opacity="0.8"/>
<rect x="450" y="0" width="2" height="71" fill="url(#dot)" opacity="0.3"/>
<rect x="1193" y="0" width="1.5" height="71" fill="#ff0000"/>
<rect x="1333" y="0" width="1.5" height="71" fill="#ff0000"/>
</svg><div class="" style="left:1195px;top:926px;width:141px;height:4px;background:#ff0000"></div><div class="" style="left:1785px;top:903px;width:2px;height:100px;background:#c8c8c8"></div><div class="" style="left:1787px;top:904px;width:97px;height:98px;background:#000"></div><div class="" style="left:1884px;top:903px;width:2px;height:100px;background:#c8c8c8"></div><svg style="position:absolute;left:1787px;top:904px" width="97" height="98"><path d="M0 96L6 90L12 80L18 70L22 60L25 52L29 46L33 38L37 28L41 16L45 7L47 1L49 1L54 10L59 20L65 34L69 46L74 56L79 66L85 74L90 84L95 96" fill="none" stroke="#00ff00" stroke-width="1.1"/></svg><div class="" style="left:1887px;top:903px;width:17px;height:125px;background:#e8e8e8"></div><div class="" style="left:1888px;top:904px;width:15px;height:19px;background:#fafafa"></div><div class="" style="left:1888px;top:923px;width:15px;height:104px;background:#008c00"></div><div class="" style="left:1904px;top:903px;width:15px;height:125px;background:#585858;border-radius:3px"></div><div class="" style="left:1906px;top:1015px;width:11px;height:7px;background:#f0f0f0;border-radius:3px"></div><div class="btn" style="left:2px;top:1007px;width:104px;height:20px;"></div><div class="t" style="left:2.00px;width:104px;text-align:center;top:1008.02px;font-size:11.5px;line-height:20px;">WF</div><div class="btn" style="left:107px;top:1007px;width:35px;height:20px;"></div><svg style="position:absolute;left:117px;top:1011px" width="12" height="10.5"><path d="M12 0L0 5.25L12 10.5z" fill="#000"/></svg><div class="fld" style="left:143px;top:1007px;width:105px;height:20px;background:#fff"></div><div class="t" style="left:145.50px;width:100px;text-align:center;top:1008.02px;font-size:11.5px;line-height:20px;letter-spacing:1.1px">-40</div><div class="btn" style="left:249px;top:1007px;width:34px;height:20px;"></div><svg style="position:absolute;left:259px;top:1011px" width="12" height="10.5"><path d="M0 0L12 5.25L0 10.5z" fill="#000"/></svg><div class="btn" style="left:284px;top:1007px;width:35px;height:20px;"></div><svg style="position:absolute;left:294px;top:1011px" width="12" height="10.5"><path d="M12 0L0 5.25L12 10.5z" fill="#000"/></svg><div class="fld" style="left:320px;top:1007px;width:105px;height:20px;background:#fff"></div><div class="t" style="left:322.50px;width:100px;text-align:center;top:1008.02px;font-size:11.5px;line-height:20px;letter-spacing:1.1px">70</div><div class="btn" style="left:426px;top:1007px;width:34px;height:20px;"></div><svg style="position:absolute;left:436px;top:1011px" width="12" height="10.5"><path d="M0 0L12 5.25L0 10.5z" fill="#000"/></svg><div class="btn" style="left:461px;top:1007px;width:88px;height:20px;"></div><div class="t" style="left:461.00px;width:88px;text-align:center;top:1008.02px;font-size:11.5px;line-height:20px;">x2</div><div class="btn" style="left:550px;top:1007px;width:64px;height:20px;"></div><svg style="position:absolute;left:576px;top:1010px" width="8" height="11.5"><path d="M8 0L0 5.75L8 11.5z" fill="#000"/></svg><div class="btn" style="left:614px;top:1007px;width:63px;height:20px;"></div><div class="" style="left:640px;top:1010px;width:8px;height:11.5px;background:#000"></div><div class="btn" style="left:677px;top:1007px;width:63px;height:20px;"></div><svg style="position:absolute;left:704px;top:1010px" width="7.5" height="11.5"><path d="M0 0L7.5 5.75L0 11.5z" fill="#000"/></svg><div class="btn" style="left:740px;top:1007px;width:158px;height:20px;"></div><div class="t" style="left:740.00px;width:158px;text-align:center;top:1008.02px;font-size:11.5px;line-height:20px;">NORM</div><div class="btn" style="left:898px;top:1007px;width:49px;height:20px;"></div><svg style="position:absolute;left:904px;top:1011px" width="32" height="10"><path d="M0 5L16 0V10zM15 5L31 0V10z" fill="#000"/></svg><div class="btn" style="left:947px;top:1007px;width:48px;height:20px;"></div><svg style="position:absolute;left:960px;top:1011px" width="16" height="10"><path d="M16 0L0 5.0L16 10z" fill="#000"/></svg><div class="fld" style="left:995px;top:1007px;width:133px;height:20px;background:#fff"></div><div class="t" style="left:996.50px;width:130px;text-align:center;top:1008.02px;font-size:11.5px;line-height:20px;letter-spacing:1.1px">2526</div><div class="btn" style="left:1128px;top:1007px;width:47px;height:20px;"></div><svg style="position:absolute;left:1143px;top:1011px" width="16" height="10"><path d="M0 0L16 5.0L0 10z" fill="#000"/></svg><div class="btn" style="left:1175px;top:1007px;width:48px;height:20px;"></div><svg style="position:absolute;left:1184px;top:1011px" width="32" height="10"><path d="M0 0L16 5L0 10zM15 0L31 5L15 10z" fill="#000"/></svg><div class="btnd" style="left:1224px;top:1007px;width:110px;height:20px;"></div><div class="t" style="left:1224.00px;width:110px;text-align:center;top:1008.02px;font-size:11.5px;line-height:20px;color:#9a9a9a">QSY</div><div class="btn" style="left:1338px;top:1007px;width:138px;height:20px;"></div><div class="t" style="left:1338.00px;width:138px;text-align:center;top:1008.02px;font-size:11.5px;line-height:20px;">Store</div><div class="btn" style="left:1479px;top:1007px;width:111px;height:20px;"></div><div class="" style="left:1484px;top:1012px;width:4px;height:9px;border-left:1px solid #909090;border-top:1px solid #909090"></div><div class="t" style="left:1490px;top:1008.02px;font-size:11.5px;line-height:20px;">Lk</div><div class="btn" style="left:1746px;top:1007px;width:139px;height:20px;"></div><div class="" style="left:1751px;top:1012px;width:4px;height:9px;border-left:1px solid #909090;border-top:1px solid #909090"></div><div class="t" style="left:1757px;top:1008.02px;font-size:11.5px;line-height:20px;">T/R</div><div class="fld" style="left:1px;top:1028px;width:109px;height:19px;background:#fff"></div><div class="t" style="left:5.5px;top:1028.67px;font-size:12.5px;line-height:20px;letter-spacing:-0.45px">THOR8</div><div class="fld" style="left:111px;top:1028px;width:109px;height:19px;background:#fff"></div><div class="t" style="left:114.5px;top:1028.67px;font-size:12.5px;line-height:20px;letter-spacing:0.05px">s/n  -4 dB</div><div class="fld" style="left:221px;top:1028px;width:109px;height:19px;background:#fff"></div><div class="t" style="left:224.5px;top:1028.67px;font-size:12.5px;line-height:20px;letter-spacing:-0.1px">FEC: 100%</div><div class="fld" style="left:331px;top:1028px;width:1333px;height:19px;background:#fff"></div><div class="t" style="left:335px;top:1028.67px;font-size:12.5px;line-height:20px;letter-spacing:0.7px">hdw w w w w w w w$</div><div class="" style="left:0px;top:1047px;width:1920px;height:1px;background:#a0a0a0"></div><div class="" style="left:0px;top:1048px;width:1920px;height:1px;background:#c4c4c4"></div><div class="" style="left:392px;top:1048px;width:1528px;height:1px;background:#101a1e"></div><div class="" style="left:0px;top:1048px;width:48px;height:1px;background:#101a1e"></div><div class="btn" style="left:1665px;top:1028px;width:17px;height:19px;"></div><svg style="position:absolute;left:1667px;top:1032px" width="12" height="12"><path d="M0 6L6 0V12zM6 6L12 0V12z" fill="#000"/></svg><div class="btn" style="left:1683px;top:1028px;width:17px;height:19px;"></div><svg style="position:absolute;left:1688px;top:1032px" width="6" height="12"><path d="M6 0L0 6.0L6 12z" fill="#000"/></svg><div class="fld" style="left:1701px;top:1028px;width:47px;height:19px;background:#fff"></div><div class="t" style="left:1701.50px;width:46px;text-align:center;top:1029.02px;font-size:11.5px;line-height:20px;letter-spacing:1.1px">-3.0</div><div class="btn" style="left:1749px;top:1028px;width:17px;height:19px;"></div><svg style="position:absolute;left:1754px;top:1032px" width="6" height="12"><path d="M0 0L6 6.0L0 12z" fill="#000"/></svg><div class="btn" style="left:1767px;top:1028px;width:17px;height:19px;"></div><svg style="position:absolute;left:1770px;top:1032px" width="12" height="12"><path d="M0 0L6 6L0 12zM6 0L12 6L6 12z" fill="#000"/></svg><svg style="position:absolute;left:1786px;top:1030px" width="12" height="16"><path d="M6 0L12 8L6 16L0 8z" fill="#000"/></svg><div class="btnd" style="left:1800px;top:1028px;width:60px;height:19px;"></div><div class="" style="left:1805px;top:1033px;width:4px;height:9px;border-left:1px solid #c8c8c8;border-top:1px solid #c8c8c8"></div><div class="t" style="left:1811px;top:1029.02px;font-size:11.5px;line-height:20px;color:#a0a0a0">AFC</div><div class="btn" style="left:1861px;top:1028px;width:58px;height:19px;"></div><div class="" style="left:1865px;top:1033px;width:4px;height:9px;border-left:1px solid #909090;border-top:1px solid #909090"></div><div class="t" style="left:1871px;top:1029.02px;font-size:11.5px;line-height:20px;">SQL</div></body></html>
